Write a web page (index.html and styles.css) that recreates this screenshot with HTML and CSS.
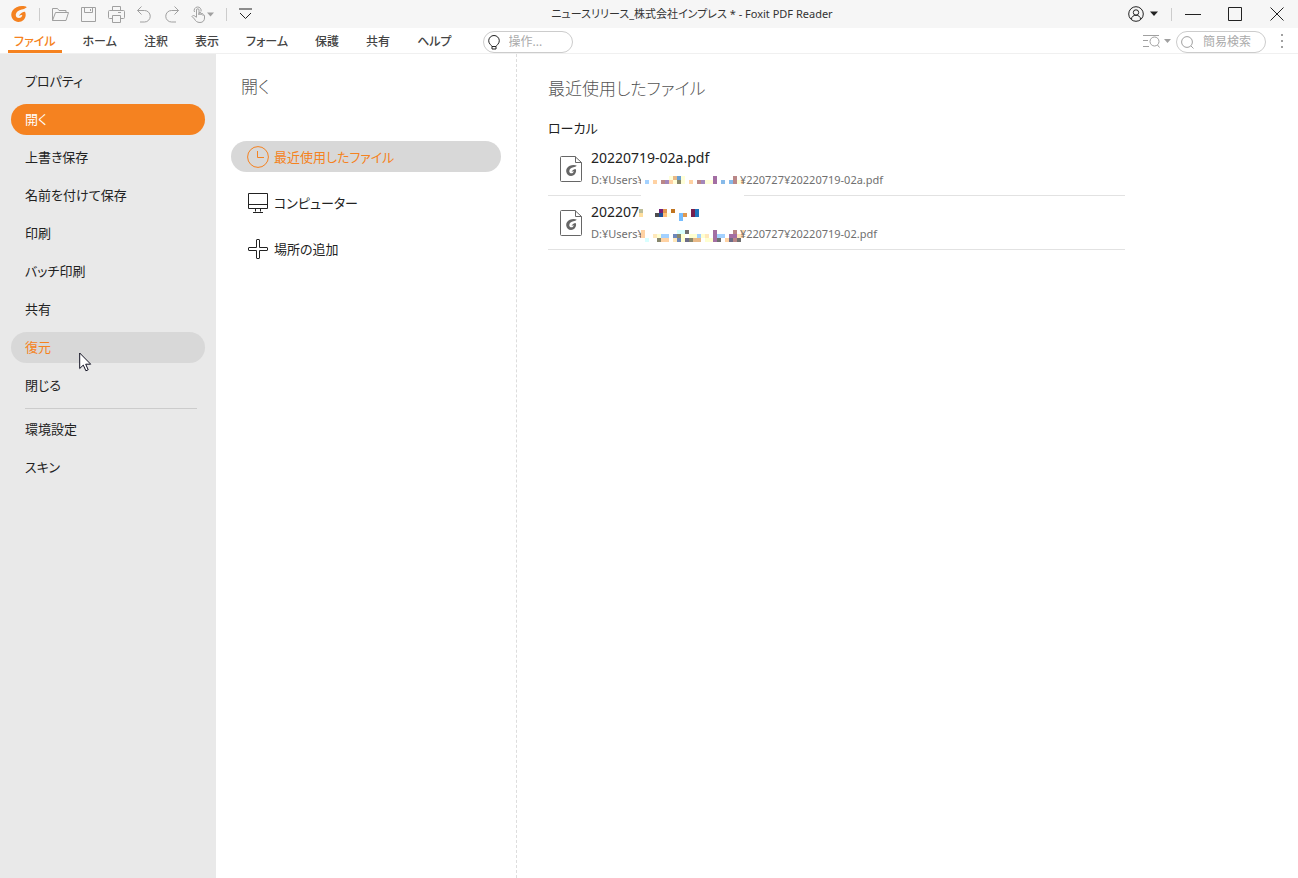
FILE: index.html
```html
<!DOCTYPE html>
<html lang="ja">
<head>
    <meta charset="UTF-8">
    <meta name="viewport" content="width=device-width, initial-scale=1.0">
    <title>ニュースリリース_株式会社インプレス * - Foxit PDF Reader</title>
    <link rel="stylesheet" href="styles.css">
</head>
<body>
    <svg class="defs" aria-hidden="true">
        <symbol id="logo" viewBox="0 0 16 16">
            <path d="M15.800 1.200C13.500-.2 9-.3 5.500 1.200 1.800 2.900 0 6 .3 9.300.7 13.200 3.800 16 7.500 15.900c4-.1 7-3.100 7.200-7 0-1.200-.2-2.100-.7-3.100-1.300 0-2.300.4-3.200 1-1.300.8-2.300 1.900-2.800 3.200 1.100-.7 2.100-1 3.300-.9-.3 1.800-1.600 3-3.400 3-2 0-3.300-1.500-3.100-3.500.3-2.800 2.800-4.700 6-5.200 1.900-.3 3.500-.9 5-2.200z"/>
        </symbol>
        <symbol id="file" viewBox="0 0 22 26">
            <path d="M.5 1.500q0-1 1-1h13.500l6.500 6v18q0 1-1 1h-19q-1 0-1-1zM15.500.5v6h6" fill="#fff" stroke="#666"/>
            <use class="mark" href="#logo" x="6" y="9" width="11" height="11"/>
        </symbol>
    </svg>

    <header class="titlebar">
        <div class="quick">
            <svg class="logo" width="16" height="16"><use href="#logo"/></svg>
            <span class="sep"></span>
            <button class="tool" aria-label="開く">
                <svg width="17" height="15" viewBox="0 0 17 15"><path d="M.5 13.500v-12h5l1.500 2h7v2M.5 13.500l3-8h13l-2.500 8z"/></svg>
            </button>
            <button class="tool" aria-label="保存">
                <svg width="15" height="15" viewBox="0 0 15 15"><path d="M.5.5h14v14H.5zM3.500.5v5h8v-5M9.500 2v2"/></svg>
            </button>
            <button class="tool" aria-label="印刷">
                <svg width="17" height="17" viewBox="0 0 17 17"><path d="M4.500 4.500v-4h8v4M4.500 12.500h-3q-1 0-1-1v-6q0-1 1-1h14q1 0 1 1v6q0 1-1 1h-3M4.500 9.500h8v7h-8zM10 6.500h3"/></svg>
            </button>
            <button class="tool" aria-label="元に戻す">
                <svg width="15" height="17" viewBox="0 0 15 17"><path d="M4.500.5l-4 4 4 4M.5 4.500h7a5.500 5.500 0 0 1 0 11.500H3"/></svg>
            </button>
            <button class="tool" aria-label="やり直し">
                <svg width="15" height="17" viewBox="0 0 15 17"><path d="M10.500.5l4 4-4 4M14.500 4.500h-7a5.500 5.500 0 0 0 0 11.500H12"/></svg>
            </button>
            <button class="tool" aria-label="手のひらツール">
                <svg width="23" height="17" viewBox="0 0 23 17"><path d="M5.500 11V4a1.200 1.200 0 0 1 2.500 0v5-2a1.200 1.200 0 0 1 2 0v2-1a1.100 1.100 0 0 1 2 0v1.500a.8.8 0 0 1 1.500 0V12c0 2.500-1.500 4.500-4.500 4.500-3 0-4.500-1.500-5.500-3.500L1 10.500c.5-1.200 2-1.200 3-.3l1.500 1.300M3.500 6a3.500 3.500 0 1 1 6.500-.5"/><path class="fill" d="M16 6.500h7l-3.500 4z"/></svg>
            </button>
            <span class="sep"></span>
            <button class="tool dark" aria-label="カスタマイズ">
                <svg width="13" height="12" viewBox="0 0 13 12"><path d="M0 1h13M1 5l5.500 5.500L12 5"/></svg>
            </button>
        </div>
        <h1 class="title">ニュースリリース_株式会社インプレス * - Foxit PDF Reader</h1>
        <div class="window">
            <button class="tool dark" aria-label="アカウント">
                <svg width="30" height="16" viewBox="0 0 30 16"><circle cx="8" cy="8" r="7.300"/><circle cx="8" cy="6.500" r="2.700"/><path d="M3.500 13c0-5 9-5 9 0"/><path class="fill" d="M22 5.500h8l-4 4.500z"/></svg>
            </button>
            <span class="sep"></span>
            <button class="tool dark" aria-label="最小化">
                <svg width="16" height="15" viewBox="0 0 16 15"><path d="M0 7.500h16"/></svg>
            </button>
            <button class="tool dark" aria-label="最大化">
                <svg width="15" height="15" viewBox="0 0 15 15"><path d="M.5.5h13v13H.5z"/></svg>
            </button>
            <button class="tool dark" aria-label="閉じる">
                <svg width="15" height="15" viewBox="0 0 15 15"><path d="M.5.5l13 13M13.500.5l-13 13"/></svg>
            </button>
        </div>
    </header>

    <nav class="menubar">
        <a class="tab active" href="#">ファイル</a>
        <a class="tab" href="#">ホーム</a>
        <a class="tab" href="#">注釈</a>
        <a class="tab" href="#">表示</a>
        <a class="tab" href="#">フォーム</a>
        <a class="tab" href="#">保護</a>
        <a class="tab" href="#">共有</a>
        <a class="tab" href="#">ヘルプ</a>
        <label class="search tell">
            <svg class="dark" width="12" height="15" viewBox="0 0 12 15"><path d="M4 11.500C3.500 10 .7 9 .7 5.800a5.300 5.300 0 0 1 10.600 0C11.300 9 8.500 10 8 11.500zM4 11.500v2.500h4v-2.500"/></svg>
            <input type="text" placeholder="操作..." aria-label="操作">
        </label>
        <div class="find">
            <button class="tool" aria-label="高度な検索">
                <svg width="28" height="14" viewBox="0 0 28 14"><path d="M0 1.500h16M0 6.500h5M0 12.500h6"/><circle cx="11.500" cy="7.500" r="4.500"/><path d="M14.500 11l2 2.500"/><path class="fill" d="M21 5h7l-3.500 4z"/></svg>
            </button>
            <label class="search">
                <svg width="13" height="13" viewBox="0 0 13 13"><circle cx="6" cy="6" r="5.400"/><path d="M10 10l2.500 2.500"/></svg>
                <input type="text" placeholder="簡易検索" aria-label="簡易検索">
            </label>
            <button class="tool more" aria-label="その他">
                <svg width="2" height="14" viewBox="0 0 2 14"><path class="fill" d="M0 0h2v2H0zM0 6h2v2H0zM0 12h2v2H0z"/></svg>
            </button>
        </div>
    </nav>

    <main class="backstage">
        <nav class="sidebar">
            <a class="item" href="#">プロパティ</a>
            <a class="item active" href="#">開く</a>
            <a class="item" href="#">上書き保存</a>
            <a class="item" href="#">名前を付けて保存</a>
            <a class="item" href="#">印刷</a>
            <a class="item" href="#">バッチ印刷</a>
            <a class="item" href="#">共有</a>
            <a class="item hover" href="#">復元
                <svg class="cursor" width="13" height="20" viewBox="0 0 13 20"><path d="M.7 1v15.500l3.600-3.400 2.600 5.700 2.300-1-2.500-5.600h5z" fill="#fff" stroke="#112"/></svg>
            </a>
            <a class="item" href="#">閉じる</a>
            <hr>
            <a class="item" href="#">環境設定</a>
            <a class="item" href="#">スキン</a>
        </nav>

        <section class="places">
            <h2>開く</h2>
            <a class="place active" href="#">
                <svg width="22" height="22" viewBox="0 0 22 22"><circle cx="11" cy="11" r="10.400"/><path d="M10.500 5v6.500H17"/></svg>
                最近使用したファイル
            </a>
            <a class="place" href="#">
                <svg width="22" height="22" viewBox="0 0 22 22"><path d="M1.500 1.500h19v15h-19zM1.500 12.500h19M8.500 16.500v3M13.500 16.500v3M6 20.500h10"/></svg>
                コンピューター
            </a>
            <a class="place" href="#">
                <svg width="22" height="22" viewBox="0 0 22 22"><path d="M9.500 2q0-.5.5-.5h2q.5 0 .5.5v7.500H20q.5 0 .5.500v2q0 .5-.5.5h-7.500V20q0 .5-.5.5h-2q-.5 0-.5-.5v-7.500H2q-.5 0-.5-.5v-2q0-.5.5-.5h7.500z"/></svg>
                場所の追加
            </a>
        </section>

        <section class="recent">
            <h2>最近使用したファイル</h2>
            <h3>ローカル</h3>
            <ul class="files">
                <li class="file">
                    <svg width="22" height="26"><use href="#file"/></svg>
                    <div>
                        <div class="name">20220719-02a.pdf</div>
                        <div class="path">D:¥Users¥<svg class="mosaic wide" width="102" height="12" viewBox="0 0 102 12" shape-rendering="crispEdges">
                            <path fill="#fff" d="M0 0h103v20H0z"/>
                            <path fill="#ffffd8" d="M28 0h4v4h-4zM40 0h4v8h-4zM32 4h4v4h-4zM64 4h8v4h-8zM96 4h4v4h-4z"/>
                            <path fill="#e8b987" d="M32 0h4v4h-4z"/>
                            <path fill="#699fd3" d="M36 0h4v4h-4z"/>
                            <path fill="#a3d1ff" d="M4 4h4v4H4z"/>
                            <path fill="#ffd2a3" d="M12 4h4v4h-4zM28 4h4v4h-4zM48 4h4v4h-4zM100 4h3v4h-3z"/>
                            <path fill="#ba8787" d="M20 4h4v4h-4zM56 4h4v4h-4zM92 0h4v8h-4z"/>
                            <path fill="#a387ba" d="M24 4h4v4h-4zM60 4h4v4h-4z"/>
                            <path fill="#87876c" d="M36 4h4v4h-4z"/>
                            <path fill="#a36ea3" d="M72 0h4v8h-4z"/>
                            <path fill="#87bae9" d="M80 4h4v4h-4zM88 4h4v4h-4z"/>
                        </svg>¥220727¥20220719-02a.pdf</div>
                    </div>
                </li>
                <li class="file">
                    <svg width="22" height="26"><use href="#file"/></svg>
                    <div>
                        <div class="name">202207<svg class="mosaic" width="64" height="12" viewBox="0 0 64 12" shape-rendering="crispEdges">
                            <path fill="#bdbd98" d="M0 0h4v4H0z"/>
                            <path fill="#ffdf9f" d="M0 4h4v4H0z"/>
                            <path fill="#751f75" d="M20 0h4v4h-4z"/>
                            <path fill="#e0984e" d="M24 0h4v4h-4zM44 4h4v4h-4z"/>
                            <path fill="#c0741f" d="M32 0h4v4h-4z"/>
                            <path fill="#4e4e4e" d="M16 4h4v4h-4z"/>
                            <path fill="#1f4e98" d="M20 4h4v4h-4z"/>
                            <path fill="#ffbd75" d="M24 4h4v4h-4z"/>
                            <path fill="#ffffe0" d="M28 4h4v4h-4z"/>
                            <path fill="#75bdff" d="M40 4h4v8h-4z"/>
                            <path fill="#751f4e" d="M52 0h4v8h-4z"/>
                            <path fill="#1f74bd" d="M56 0h4v8h-4z"/>
                        </svg></div>
                        <div class="path">D:¥Users¥<svg class="mosaic wide" width="102" height="12" viewBox="0 0 102 12" shape-rendering="crispEdges">
                            <path fill="#fff" d="M0 0h103v12H0z"/>
                            <path fill="#ffd2a3" d="M0 0h4v8H0zM20 8h8v4h-8zM84 8h4v4h-4zM100 0h3v8h-3z"/>
                            <path fill="#d8ffff" d="M4 8h4v4H4zM36 0h8v4h-8z"/>
                            <path fill="#ffe8ba" d="M12 4h4v4h-4zM32 8h4v4h-4zM64 4h4v4h-4zM96 4h4v4h-4z"/>
                            <path fill="#ffffd0" d="M16 4h4v4h-4zM40 4h4v8h-4zM48 4h8v4h-8zM60 4h4v4h-4zM64 8h8v4h-8z"/>
                            <path fill="#a3d1ff" d="M20 4h8v4h-8zM56 4h4v4h-4zM76 4h8v4h-8z"/>
                            <path fill="#6c87ba" d="M32 4h4v4h-4zM36 8h4v4h-4z"/>
                            <path fill="#87876c" d="M36 4h4v4h-4zM16 8h4v4h-4zM48 8h4v4h-4z"/>
                            <path fill="#707070" d="M44 0h4v4h-4zM76 8h4v4h-4zM96 8h4v4h-4z"/>
                            <path fill="#e8b987" d="M52 8h8v4h-8z"/>
                            <path fill="#a36ea3" d="M72 0h4v12h-4zM88 4h8v4h-8z"/>
                            <path fill="#ba8787" d="M92 0h4v4h-4zM92 8h4v4h-4z"/>
                            <path fill="#6c6c87" d="M44 8h4v4h-4zM88 8h4v4h-4z"/>
                        </svg>¥220727¥20220719-02.pdf</div>
                    </div>
                </li>
            </ul>
        </section>
    </main>
</body>
</html>
```
FILE: styles.css
```css
* {
    box-sizing: border-box;
}

body {
    margin: 0;
    min-height: 100vh;
    display: flex;
    flex-direction: column;
    background: #fff;
    color: #222;
    font-family: "Noto Sans", "Noto Sans CJK JP", sans-serif;
    font-size: 13px;
    line-height: 20px;
    font-feature-settings: "palt";
}

a {
    color: inherit;
    text-decoration: none;
}

svg {
    display: block;
    flex: none;
    fill: none;
    stroke: currentColor;
}

svg .fill {
    fill: currentColor;
    stroke: none;
}

svg .mark {
    fill: #666;
    stroke: none;
}

.defs {
    position: absolute;
    width: 0;
    height: 0;
}

/* title bar */
.titlebar {
    height: 28px;
    display: flex;
    align-items: center;
    justify-content: space-between;
    background: #f6f6f6;
}

.quick,
.window {
    flex: 1;
    display: flex;
    align-items: center;
    gap: 12px;
}

.quick {
    padding-left: 11px;
}

.window {
    justify-content: flex-end;
    gap: 13px;
    padding-right: 13px;
}

.window .tool + .tool {
    margin-left: 14px;
}

.logo {
    fill: #f58220;
    stroke: none;
}

.sep {
    width: 1px;
    height: 13px;
    background: #ccc;
}

.tool {
    padding: 0;
    border: none;
    background: none;
    color: #a0a0a0;
}

.dark {
    color: #222;
}

.title {
    margin: 0;
    padding-left: 88px;
    font-size: 11px;
    font-weight: normal;
    white-space: nowrap;
    color: #333;
}

/* menu bar */
.menubar {
    height: 26px;
    display: flex;
    align-items: stretch;
    padding: 0 15px 0 8px;
    gap: 15px;
    border-bottom: 1px solid #f0f0f0;
    font-size: 12px;
}

.tab {
    padding: 4px 6px 0;
    border-bottom: 3px solid transparent;
    line-height: 19px;
    font-weight: 500;
    white-space: nowrap;
    color: #444;
}

.tab.active {
    color: #f58220;
    border-color: #f58220;
}

.search {
    width: 90px;
    height: 22px;
    display: flex;
    align-items: center;
    align-self: center;
    margin-top: 3px;
    padding: 0 4px;
    gap: 9px;
    border: 1px solid #ccc;
    border-radius: 11px;
    color: #a0a0a0;
}

.tell {
    margin-left: 10px;
}

.search input {
    flex: 1;
    min-width: 0;
    padding: 0;
    border: none;
    outline: none;
    background: none;
    font: inherit;
}

.search input::placeholder {
    color: #aaa;
}

.find {
    margin-left: auto;
    display: flex;
    align-items: center;
    gap: 5px;
}

.more {
    margin-left: 10px;
}

/* file menu */
.backstage {
    flex: 1;
    display: flex;
}

.sidebar {
    width: 216px;
    padding: 12px 11px;
    background: #e9e9e9;
}

.item {
    height: 31px;
    display: flex;
    align-items: center;
    position: relative;
    margin-bottom: 7px;
    padding: 0 14px 2px;
    border-radius: 16px;
}

.item.active {
    background: #f58220;
    color: #fff;
}

.item.hover {
    background: #d8d8d8;
    color: #f58220;
}

.cursor {
    position: absolute;
    left: 68px;
    top: 20px;
    z-index: 1;
}

.sidebar hr {
    height: 1px;
    margin: 0 8px 5px 14px;
    border: none;
    background: #ccc;
}

h2 {
    margin: 0;
    font-size: 17px;
    line-height: 26px;
    font-weight: 300;
    color: #555;
}

.places {
    width: 301px;
    padding: 20px 15px;
    border-right: 1px dashed #ddd;
}

.places h2 {
    margin-bottom: 41px;
    padding-left: 10px;
}

.place {
    height: 31px;
    display: flex;
    align-items: center;
    gap: 5px;
    margin-bottom: 15px;
    padding: 0 16px;
    border-radius: 16px;
}

.place.active {
    background: #d8d8d8;
    color: #f58220;
}

.recent {
    flex: 1;
    padding: 22px 173px 20px 31px;
}

h3 {
    margin: 16px 0 0;
    font-size: 13px;
    line-height: 20px;
    font-weight: normal;
}

.files {
    margin: 4px 0 0;
    padding: 0;
    list-style: none;
}

.file {
    height: 54px;
    display: flex;
    align-items: center;
    gap: 9px;
    padding-left: 12px;
    border-bottom: 1px solid #e2e2e2;
    white-space: nowrap;
}

.name {
    height: 20px;
    font-size: 14px;
}

.path {
    height: 20px;
    margin-top: 2px;
    font-size: 11px;
    color: #707070;
}

.mosaic {
    display: inline-block;
    overflow: visible;
    stroke: none;
    vertical-align: -4px;
}

.mosaic.wide {
    margin: 0 -3px;
}
```
